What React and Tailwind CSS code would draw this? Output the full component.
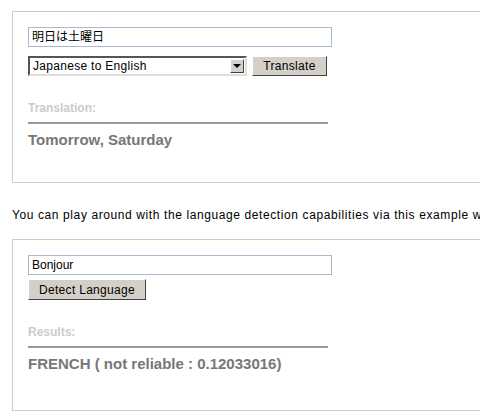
export default function App() {
  const f = { fontFamily: '"Liberation Sans", "Noto Sans CJK JP", sans-serif' };
  const box = "border border-[#cccccc] w-[600px] pl-[15px] pt-[15px]";
  return (
    <div className="w-[480px] h-[417px] overflow-hidden bg-white pt-[11px] pl-[12px]" style={f}>
      <div className={box + " h-[172px]"}>
        <div className="w-[304px] h-[20px] border border-[#a5b9d0] text-[12px] text-black px-[3px] leading-[18px]">明日は土曜日</div>
        <div className="flex mt-[9px] gap-[5px]">
          <div className="w-[219px] h-[20px] border-2 border-t-[#555] border-l-[#555] border-b-[#ddd] border-r-[#ddd] flex items-center justify-between text-[12px] pl-[3px] pr-[1px] tracking-[0.3px]">
            <span>Japanese to English</span>
            <div className="w-[14px] h-[14px] bg-[#d4d0c8] border border-t-white border-l-white border-b-[#404040] border-r-[#404040] flex items-center justify-center">
              <div className="w-0 h-0 border-l-[4px] border-r-[4px] border-t-[4px] border-l-transparent border-r-transparent border-t-black" />
            </div>
          </div>
          <div className="w-[75px] h-[20px] bg-[#d4d0c8] border border-t-white border-l-white border-b-[#404040] border-r-[#404040] text-[12px] flex items-center justify-center tracking-[0.3px]">Translate</div>
        </div>
        <div className="mt-[23px] text-[12px] font-bold text-[#cccccc]">Translation:</div>
        <div className="w-[300px] h-[2px] bg-[#999] mt-[5px]" />
        <div className="mt-[5px] text-[15px] font-bold text-[#777]">Tomorrow, Saturday</div>
      </div>
      <div className="mt-[23px] text-[12px] text-black whitespace-nowrap tracking-[0.6px]">You can play around with the language detection capabilities via this example widget</div>
      <div className={box + " mt-[15px] h-[172px]"}>
        <div className="w-[304px] h-[20px] border border-[#a5b9d0] text-[12px] text-black px-[3px] leading-[18px]">Bonjour</div>
        <div className="mt-[4px] w-[118px] h-[21px] bg-[#d4d0c8] border border-t-white border-l-white border-b-[#404040] border-r-[#404040] text-[12px] flex items-center justify-center tracking-[0.3px]">Detect Language</div>
        <div className="mt-[23px] text-[12px] font-bold text-[#cccccc]">Results:</div>
        <div className="w-[300px] h-[2px] bg-[#999] mt-[5px]" />
        <div className="mt-[5px] text-[15px] font-bold text-[#777]">FRENCH ( not reliable : 0.12033016)</div>
      </div>
    </div>
  );
}
